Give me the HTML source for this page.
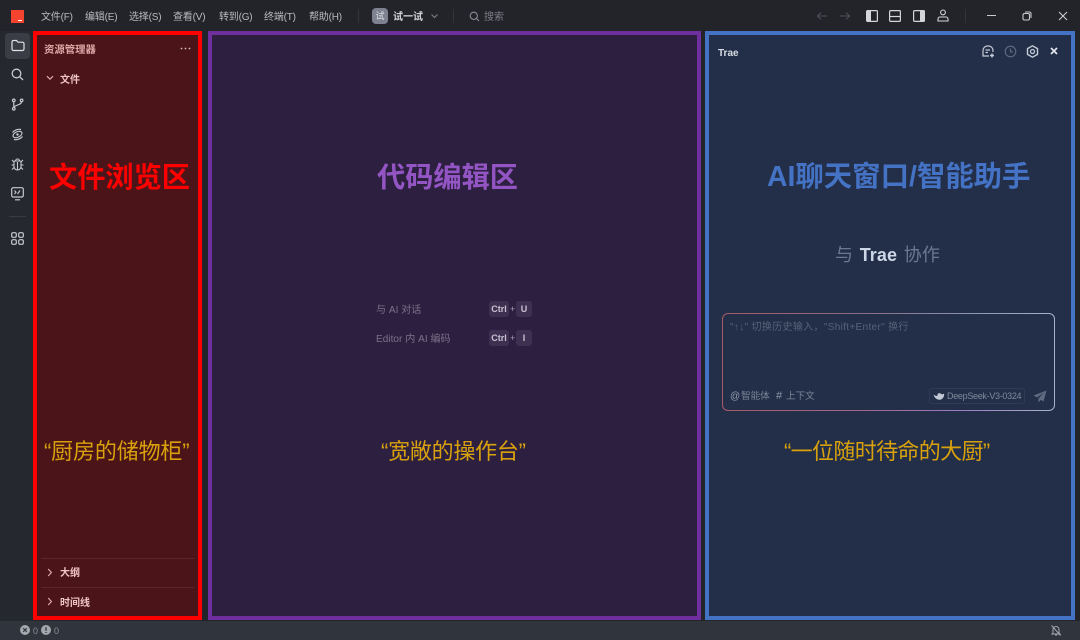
<!DOCTYPE html>
<html lang="zh-CN">
<head>
<meta charset="utf-8">
<title>Trae</title>
<style>
*{box-sizing:border-box;margin:0;padding:0}
html,body{width:1080px;height:640px;overflow:hidden;background:#232429}
body{position:relative;font-family:"Liberation Sans","Noto Sans CJK SC",sans-serif}
.t{position:absolute;white-space:nowrap;line-height:1}
.box{position:absolute;border-style:solid;border-width:4px}
svg{position:absolute;overflow:visible}
.menu{font-size:10px;color:#b8bac0;top:13px;letter-spacing:-.2px}
.k{position:absolute;height:16px;border-radius:3px;background:#3d3050;color:#c9c4d4;font-size:9px;font-weight:bold;text-align:center;line-height:16px}
</style>
</head>
<body>
<!-- sidebar / status -->
<div style="position:absolute;left:0;top:31px;width:33px;height:590px;background:#25282e"></div>
<div style="position:absolute;left:0;top:621px;width:1080px;height:19px;background:#30343c"></div>

<!-- logo -->
<div style="position:absolute;left:11px;top:10px;width:13px;height:13px;background:#f4432f"></div>
<div style="position:absolute;left:18px;top:20px;width:4px;height:1px;background:#fff"></div>

<!-- menu -->
<div class="t menu" style="left:41px">文件(F)</div>
<div class="t menu" style="left:85px">编辑(E)</div>
<div class="t menu" style="left:129px">选择(S)</div>
<div class="t menu" style="left:173px">查看(V)</div>
<div class="t menu" style="left:219px">转到(G)</div>
<div class="t menu" style="left:264px">终端(T)</div>
<div class="t menu" style="left:309px">帮助(H)</div>
<div style="position:absolute;left:358px;top:9px;width:1px;height:14px;background:#33353b"></div>
<div class="t" style="left:372px;top:8px;width:16px;height:16px;border-radius:4px;background:#7e818f;color:#dfe0e6;font-size:9px;line-height:16px;text-align:center">试</div>
<div class="t" style="left:393px;top:13px;font-size:10px;font-weight:bold;color:#d0d2d6">试一试</div>
<svg style="left:430px;top:13px" width="9" height="6" viewBox="0 0 9 6"><path d="M1.5 1.5 4.5 4.5 7.5 1.5" fill="none" stroke="#7d8087" stroke-width="1.1"/></svg>
<div style="position:absolute;left:453px;top:9px;width:1px;height:14px;background:#33353b"></div>
<svg style="left:469px;top:11px" width="11" height="11" viewBox="0 0 11 11"><circle cx="4.8" cy="4.8" r="3.6" fill="none" stroke="#8a8d94" stroke-width="1.1"/><path d="M7.5 7.5 10 10" stroke="#8a8d94" stroke-width="1.1"/></svg>
<div class="t" style="left:484px;top:13px;font-size:10px;color:#7b7e85">搜索</div>

<!-- top right icons -->
<svg style="left:816px;top:10px" width="12" height="12" viewBox="0 0 12 12"><path d="M11 6H1.5M5 2.5 1.5 6 5 9.5" fill="none" stroke="#4c4f56" stroke-width="1.1"/></svg>
<svg style="left:839px;top:10px" width="12" height="12" viewBox="0 0 12 12"><path d="M1 6H10.5M7 2.5 10.5 6 7 9.5" fill="none" stroke="#4c4f56" stroke-width="1.1"/></svg>
<svg style="left:866px;top:10px" width="12" height="12" viewBox="0 0 12 12"><rect x=".6" y=".6" width="10.8" height="10.8" rx="1" fill="none" stroke="#d4d5d9" stroke-width="1.2"/><rect x="1" y="1" width="4" height="10" fill="#d4d5d9"/></svg>
<svg style="left:889px;top:10px" width="12" height="12" viewBox="0 0 12 12"><rect x=".6" y=".6" width="10.8" height="10.8" rx="1" fill="none" stroke="#d4d5d9" stroke-width="1.2"/><path d="M1 6.5H11" stroke="#d4d5d9" stroke-width="1.2"/></svg>
<svg style="left:913px;top:10px" width="12" height="12" viewBox="0 0 12 12"><rect x=".6" y=".6" width="10.8" height="10.8" rx="1" fill="none" stroke="#d4d5d9" stroke-width="1.2"/><rect x="7" y="1" width="4" height="10" fill="#d4d5d9"/></svg>
<svg style="left:937px;top:9px" width="12" height="13" viewBox="0 0 12 13"><circle cx="6" cy="3.4" r="2.4" fill="none" stroke="#d4d5d9" stroke-width="1.1"/><path d="M1 12V10a2 2 0 0 1 2-2H9a2 2 0 0 1 2 2V12Z" fill="none" stroke="#d4d5d9" stroke-width="1.1"/></svg>
<div style="position:absolute;left:965px;top:9px;width:1px;height:14px;background:#33353b"></div>
<div style="position:absolute;left:987px;top:15px;width:9px;height:1px;background:#c9cace"></div>
<svg style="left:1022px;top:11px" width="10" height="10" viewBox="0 0 10 10"><rect x="1" y="2.5" width="6.5" height="6.5" rx="1.5" fill="none" stroke="#c9cace" stroke-width="1.1"/><path d="M3 1H7.5A1.8 1.8 0 0 1 9 2.8V7" fill="none" stroke="#c9cace" stroke-width="1.1"/></svg>
<svg style="left:1058px;top:11px" width="10" height="10" viewBox="0 0 10 10"><path d="M1 1 9 9M9 1 1 9" stroke="#c9cace" stroke-width="1.1"/></svg>

<!-- activity icons -->
<div style="position:absolute;left:5px;top:33px;width:25px;height:26px;border-radius:4px;background:#3a3d45"></div>
<svg style="left:11px;top:39px" width="14" height="13" viewBox="0 0 14 13"><path d="M1 3A1.5 1.5 0 0 1 2.5 1.5H5.5L7 3.2H11.5A1.5 1.5 0 0 1 13 4.7V10A1.5 1.5 0 0 1 11.5 11.5H2.5A1.5 1.5 0 0 1 1 10Z" fill="none" stroke="#e2e3e6" stroke-width="1.2"/></svg>
<svg style="left:11px;top:68px" width="13" height="13" viewBox="0 0 13 13"><circle cx="5.5" cy="5.5" r="4.3" fill="none" stroke="#c8cad0" stroke-width="1.3"/><path d="M8.7 8.7 12 12" stroke="#c8cad0" stroke-width="1.3"/></svg>
<svg style="left:11px;top:98px" width="13" height="13" viewBox="0 0 13 13"><circle cx="2.8" cy="2.4" r="1.3" fill="none" stroke="#c8cad0" stroke-width="1.2"/><circle cx="2.8" cy="10.8" r="1.3" fill="none" stroke="#c8cad0" stroke-width="1.2"/><circle cx="10.6" cy="2.4" r="1.3" fill="none" stroke="#c8cad0" stroke-width="1.2"/><path d="M2.8 3.7V9.5M10.6 3.7C10.6 6.5 6 6.5 2.8 9" fill="none" stroke="#c8cad0" stroke-width="1.2"/></svg>
<svg style="left:11px;top:128px" width="13" height="13" viewBox="0 0 13 13"><path d="M1.5 4.5C3.5 2 7 .8 10 1.5M11.5 8.5C9.5 11 6 12.2 3 11.5" fill="none" stroke="#c8cad0" stroke-width="1.2"/><ellipse cx="6.5" cy="6.5" rx="4.8" ry="2.7" fill="none" stroke="#c8cad0" stroke-width="1.1" transform="rotate(-25 6.5 6.5)"/><circle cx="6.5" cy="6.5" r="1.2" fill="#c8cad0"/></svg>
<svg style="left:11px;top:157px" width="13" height="14" viewBox="0 0 13 14"><path d="M4 4H9A1 1 0 0 1 10 5V9.5A3.5 3.5 0 0 1 3 9.5V5A1 1 0 0 1 4 4ZM4.5 4A2 2 0 0 1 8.5 4M6.5 5V12.5M3 5 1 3M10 5 12 3M3 8H.5M10 8H12.5M3 10.5 1 12.5M10 10.5 12 12.5" fill="none" stroke="#c8cad0" stroke-width="1.1"/></svg>
<svg style="left:11px;top:187px" width="13" height="14" viewBox="0 0 13 14"><rect x=".7" y=".7" width="11.6" height="9.3" rx="1.5" fill="none" stroke="#c8cad0" stroke-width="1.2"/><path d="M4 12.8H9M3.5 3.5 5 5.2 3.5 7M6.5 7 9 3.5" fill="none" stroke="#c8cad0" stroke-width="1.1"/></svg>
<div style="position:absolute;left:9px;top:216px;width:17px;height:1px;background:#383b42"></div>
<svg style="left:11px;top:232px" width="13" height="13" viewBox="0 0 13 13"><g fill="none" stroke="#c8cad0" stroke-width="1.2"><rect x=".7" y=".7" width="4.6" height="4.6" rx="1.4"/><rect x="7.7" y=".7" width="4.6" height="4.6" rx="1.4"/><rect x=".7" y="7.7" width="4.6" height="4.6" rx="1.4"/><rect x="7.7" y="7.7" width="4.6" height="4.6" rx="1.4"/></g></svg>

<!-- status -->
<svg style="left:20px;top:625px" width="10" height="10" viewBox="0 0 10 10"><circle cx="5" cy="5" r="5" fill="#a3a7ae"/><path d="M3.2 3.2 6.8 6.8M6.8 3.2 3.2 6.8" stroke="#30343c" stroke-width="1.1"/></svg>
<div class="t" style="left:33px;top:627px;font-size:9px;color:#8c9098">0</div>
<svg style="left:41px;top:625px" width="10" height="10" viewBox="0 0 10 10"><circle cx="5" cy="5" r="5" fill="#a3a7ae"/><path d="M5 2.2V5.8M5 7V8" stroke="#30343c" stroke-width="1.3"/></svg>
<div class="t" style="left:54px;top:627px;font-size:9px;color:#8c9098">0</div>
<svg style="left:1051px;top:625px" width="10" height="11" viewBox="0 0 10 11"><path d="M2 8V4.5A3 3 0 0 1 8 4.5V8L9 9H1ZM4 10H6M.5 .5 9.5 10.5" fill="none" stroke="#a3a7ae" stroke-width="1"/></svg>

<!-- RED PANEL -->
<div class="box" style="left:33px;top:31px;width:169px;height:589px;border-color:#ff0000;background:#4a1418"></div>
<div class="t" style="left:44px;top:45px;font-size:10.4px;font-weight:bold;color:#dfa9a9;transform:translateY(1px)">资源管理器</div>
<svg style="left:180px;top:47px" width="11" height="3" viewBox="0 0 11 3"><g fill="#d9b8b8"><circle cx="1.5" cy="1.5" r=".9"/><circle cx="5.5" cy="1.5" r=".9"/><circle cx="9.5" cy="1.5" r=".9"/></g></svg>
<svg style="left:46px;top:75px" width="8" height="6" viewBox="0 0 8 6"><path d="M1 1.2 4 4.2 7 1.2" fill="none" stroke="#dfa9a9" stroke-width="1.2"/></svg>
<div class="t" style="left:60px;top:76px;font-size:10px;font-weight:bold;color:#efc4c4">文件</div>
<div class="t" style="left:49px;top:163px;font-size:28.2px;font-weight:bold;color:#ff0000">文件浏览区</div>
<div class="t" style="left:44px;top:441px;font-size:22px;color:#d9a20c;letter-spacing:-.15px">“厨房的储物柜”</div>
<div style="position:absolute;left:41px;top:558px;width:153px;height:1px;background:#5e2428"></div>
<svg style="left:47px;top:568px" width="6" height="9" viewBox="0 0 6 9"><path d="M1.2 1 4.4 4.5 1.2 8" fill="none" stroke="#dfa9a9" stroke-width="1.2"/></svg>
<div class="t" style="left:60px;top:569px;font-size:10px;font-weight:bold;color:#efc4c4">大纲</div>
<div style="position:absolute;left:41px;top:587px;width:153px;height:1px;background:#5e2428"></div>
<svg style="left:47px;top:597px" width="6" height="9" viewBox="0 0 6 9"><path d="M1.2 1 4.4 4.5 1.2 8" fill="none" stroke="#dfa9a9" stroke-width="1.2"/></svg>
<div class="t" style="left:60px;top:599px;font-size:10px;font-weight:bold;color:#efc4c4">时间线</div>

<!-- PURPLE PANEL -->
<div class="box" style="left:208px;top:31px;width:493px;height:589px;border-color:#6f2f9e;background:#2d1f40"></div>
<div class="t" style="left:377px;top:163px;font-size:28.2px;font-weight:bold;color:#9355c4">代码编辑区</div>
<div class="t" style="left:376px;top:306px;font-size:10px;color:#7c7289;letter-spacing:.05px">与 AI 对话</div>
<div class="t" style="left:376px;top:335px;font-size:10px;color:#7c7289;letter-spacing:.05px">Editor 内 AI 编码</div>
<div class="k" style="left:489px;top:301px;width:20px">Ctrl</div>
<div class="t" style="left:510px;top:305px;font-size:9px;color:#a49db0">+</div>
<div class="k" style="left:516px;top:301px;width:16px">U</div>
<div class="k" style="left:489px;top:330px;width:20px">Ctrl</div>
<div class="t" style="left:510px;top:334px;font-size:9px;color:#a49db0">+</div>
<div class="k" style="left:516px;top:330px;width:16px">I</div>
<div class="t" style="left:381px;top:441px;font-size:22px;color:#d9a20c;letter-spacing:-.25px">“宽敞的操作台”</div>

<!-- BLUE PANEL -->
<div class="box" style="left:705px;top:31px;width:370px;height:589px;border-color:#4472c4;background:#232f48"></div>
<div class="t" style="left:718px;top:49px;font-size:10px;font-weight:bold;color:#d8dce4">Trae</div>
<svg style="left:982px;top:45px" width="13" height="13" viewBox="0 0 13 13"><path d="M7 11H1V5.5A4.5 4.5 0 0 1 5.5 1H6.5A4.5 4.5 0 0 1 11 5.5V7M3.5 5H8M3.5 7.5H6" fill="none" stroke="#c5cbd6" stroke-width="1.2"/><path d="M10 8.5V12.5M8 10.5H12" fill="none" stroke="#c5cbd6" stroke-width="1.4"/></svg>
<svg style="left:1004px;top:45px" width="13" height="13" viewBox="0 0 13 13"><circle cx="6.5" cy="6.5" r="5.3" fill="none" stroke="#5f6b80" stroke-width="1.1"/><path d="M6.5 3.5V6.8H9" fill="none" stroke="#5f6b80" stroke-width="1.1"/></svg>
<svg style="left:1026px;top:45px" width="13" height="13" viewBox="0 0 13 13"><path d="M6.5 .8 11.5 3.6V9.4L6.5 12.2 1.5 9.4V3.6Z" fill="none" stroke="#c5cbd6" stroke-width="1.4" stroke-linejoin="round"/><circle cx="6.5" cy="6.5" r="2" fill="none" stroke="#c5cbd6" stroke-width="1.2"/></svg>
<svg style="left:1050px;top:47px" width="8" height="8" viewBox="0 0 8 8"><path d="M1 1 7 7M7 1 1 7" stroke="#e3e6ec" stroke-width="1.7"/></svg>
<div class="t" style="left:767px;top:163px;font-size:28.4px;font-weight:bold;color:#4472c4">AI聊天窗口/智能助手</div>
<div class="t" style="left:835px;top:245px;font-size:18px;color:#6b7890;word-spacing:1.5px;letter-spacing:.1px;transform:translateY(1px)">与 <span style="color:#ccd6e6;font-weight:bold">Trae</span> 协作</div>

<!-- input -->
<div style="position:absolute;left:722px;top:313px;width:333px;height:98px;border-radius:6px;padding:1.3px;background:linear-gradient(90deg,#a85a68 0%,#8a6f86 45%,#8b8fac 70%,#a9b1c8 100%) top/100% 50% no-repeat,linear-gradient(90deg,#a85a68 0%,#a0688f 45%,#9a7cc4 70%,#a9b1c8 100%) bottom/100% 50% no-repeat"><div style="width:100%;height:100%;border-radius:5px;background:#232f48"></div></div>
<div class="t" style="left:730px;top:323px;font-size:10px;color:#566279;letter-spacing:.33px">"↑↓" 切换历史输入，"Shift+Enter" 换行</div>
<div class="t" style="left:730px;top:391px;font-size:10px;color:#939cae;transform:translateY(1px)">@</div>
<div class="t" style="left:741px;top:392px;font-size:9.6px;color:#7a8497">智能体</div>
<div class="t" style="left:776px;top:391px;font-size:11px;color:#939cae">#</div>
<div class="t" style="left:786px;top:392px;font-size:9.6px;color:#7a8497">上下文</div>
<div style="position:absolute;left:929px;top:388px;width:96px;height:16px;border:1px solid #2f3b54;border-radius:3px"></div>
<svg style="left:933px;top:392px" width="12" height="9" viewBox="0 0 12 9"><path d="M.5 2.5C1.5 6.5 5 8.5 8 7.5 10.5 6.5 11.5 3.5 11 1.5 10 2.5 9 2.5 7.5 1.5 5.5.5 4 2 4.5 4 3 4 1.5 3.5.5 2.5Z" fill="#c2c9d6"/></svg>
<div class="t" style="left:947px;top:392px;font-size:9px;color:#7f899c;letter-spacing:-.3px">DeepSeek-V3-0324</div>
<svg style="left:1033px;top:390px" width="14" height="13" viewBox="0 0 14 13"><path d="M13.5 .5 .5 5.5 4 7.5 11 2.5 5.5 8.5V12.5L7.8 9.8 10.5 11.5Z" fill="#5f6b80"/></svg>
<div class="t" style="left:784px;top:441px;font-size:22px;color:#d9a20c;letter-spacing:-.65px">“一位随时待命的大厨”</div>
</body>
</html>
